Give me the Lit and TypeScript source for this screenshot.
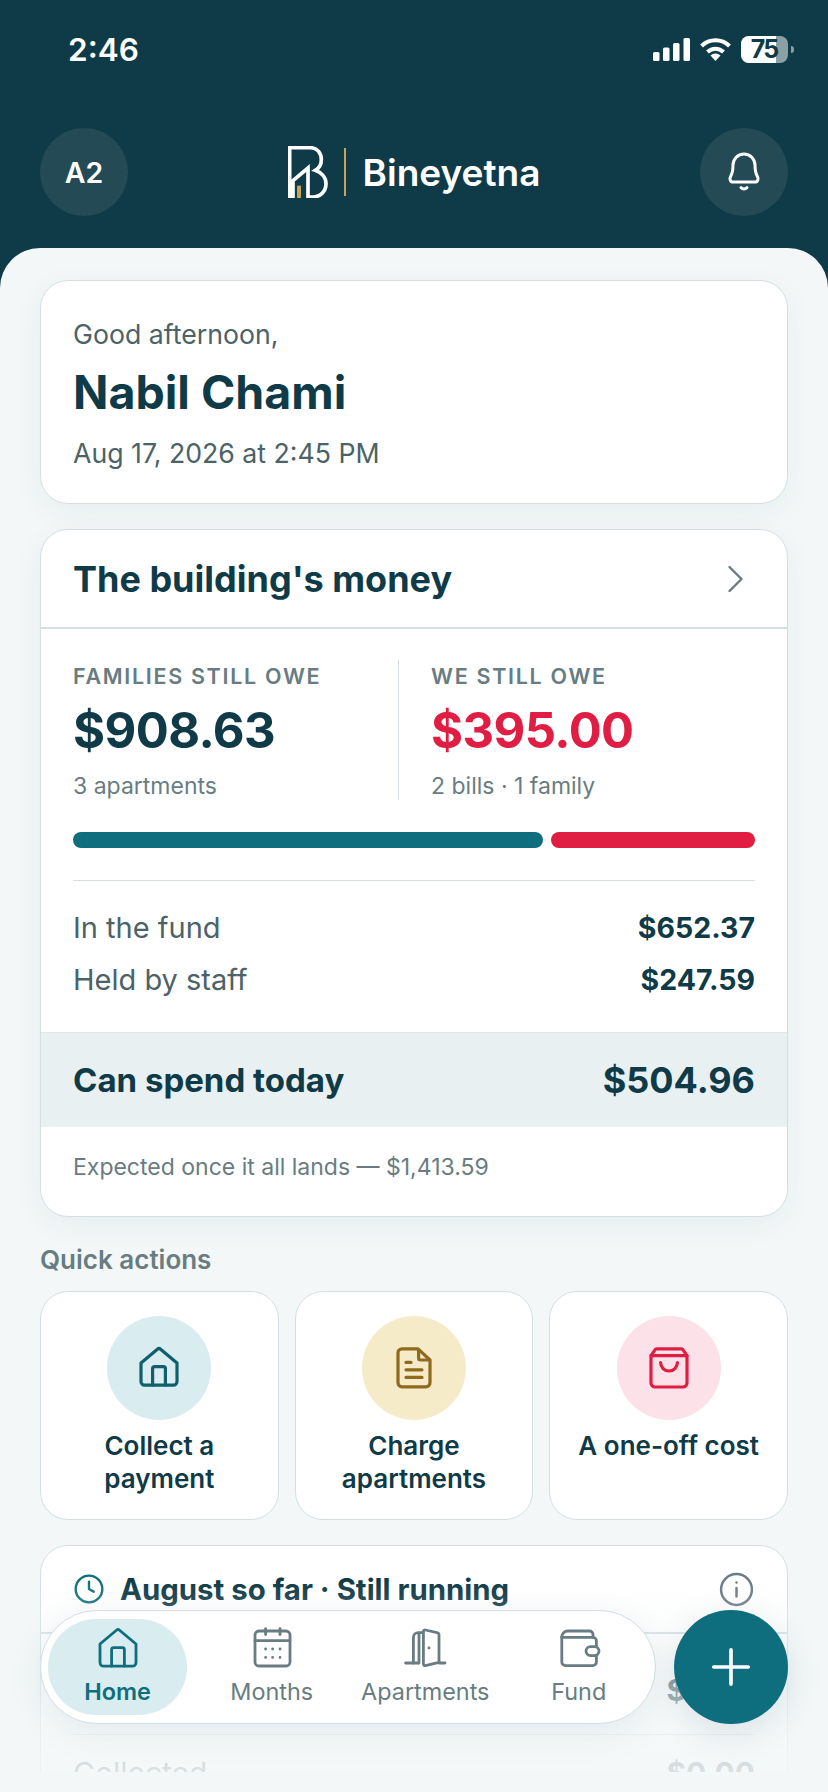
import { LitElement, html, css, svg } from 'lit';
import { customElement } from 'lit/decorators.js';

const icon = (body: unknown, size = 48, stroke = 'currentColor', width = 1.5) => html`
  <svg width=${size} height=${size} viewBox="0 0 24 24" fill="none" stroke=${stroke}
    stroke-width=${width} stroke-linecap="round" stroke-linejoin="round">${body}</svg>
`;

const HOME = svg`<path d="M3 9.500 11.200 2.600a1.200 1.200 0 0 1 1.600 0L21 9.500v9.300a1.800 1.800 0 0 1-1.800 1.800H4.800A1.800 1.800 0 0 1 3 18.800Z"/><path d="M8.800 20.500v-8.200a1 1 0 0 1 1-1h4.400a1 1 0 0 1 1 1v8.200"/>`;
const DOC = svg`<path d="M14 2.400H6a2 2 0 0 0-2 2v15a2 2 0 0 0 2 2h12a2 2 0 0 0 2-2V8Z"/><path d="M14.300 2.800V7a1 1 0 0 0 1 1h4.300"/><path d="M8 9.200h2.500M8 12.900h8M8 16.700h8"/>`;
const BAG = svg`<path d="M5.800 2.400h12.400a1 1 0 0 1 .8.500l2 2.900v13.700a2 2 0 0 1-2 2H5a2 2 0 0 1-2-2V5.800l2-2.900a1 1 0 0 1 .8-.5Z"/><path d="M3 5.800h18"/><path d="M7.800 9.300a4.200 4.200 0 0 0 8.400 0"/>`;
const CAL = svg`<rect x="3.500" y="3" width="17.500" height="17.500" rx="2"/><path d="M3.500 7.800H21M8.800 1.800v3M16 1.800v3"/><path d="M8.800 12h.01M12.300 12h.01M16 12h.01M8.800 16.200h.01M12.300 16.200h.01M16 16.200h.01"/>`;
const DOOR = svg`<path d="M2.300 19h6.500M19 19h3"/><path d="M6.200 19V6.200A2.400 2.400 0 0 1 8.600 3.800H11M9 4v15"/><path d="M11.200 3.200a.8.8 0 0 1 1-.7l5.800 1.300a1.200 1.200 0 0 1 1 1.200V18.700l-6.800 1.600a.8.8 0 0 1-1-.8Z"/><path d="M14 11.500h.01"/>`;
const WALLET = svg`<path d="M20.700 10.800V8a1.800 1.800 0 0 0-1.800-1.800H3.400"/><path d="M3.400 6v12.500a1.800 1.800 0 0 0 1.800 1.800h13.700a1.800 1.800 0 0 0 1.800-1.800v-3.200"/><path d="M3.400 6a3 3 0 0 1 3-3h10.800a1.800 1.800 0 0 1 1.800 1.800v1.400"/><rect x="15.500" y="10.800" width="6.500" height="4.500" rx="2.250"/>`;
const BELL = svg`<path d="M12 3a5.500 5.500 0 0 0-5.500 5.500c0 3-.5 4.500-1.200 5.700-.6 1-.4 2.800 1.200 2.800h11c1.600 0 1.800-1.800 1.200-2.800-.7-1.200-1.200-2.700-1.200-5.700A5.500 5.500 0 0 0 12 3Z"/><path d="M10.500 19.800a2 2 0 0 0 3 0"/>`;

@customElement('app-root')
export class AppRoot extends LitElement {
  static styles = css`
    :host {
      display: block;
      position: relative;
      width: 828px;
      height: 1792px;
      overflow: hidden;
      background: #0f3a47;
      font-family: Inter, "Liberation Sans", sans-serif;
      color: #0f3a47;
    }

    .status {
      height: 98px;
      box-sizing: border-box;
      display: flex;
      justify-content: space-between;
      align-items: center;
      padding: 0 34px 0 68px;
      color: #fff;
    }

    .time {
      font-size: 31.5px;
      font-weight: 600;
    }

    .status-icons {
      display: flex;
      align-items: center;
      gap: 10px;
    }

    .battery {
      position: relative;
      width: 47px;
      height: 27px;
      border-radius: 8px;
      background: #8aa0a4;
      color: #0f3a47;
      font-size: 25px;
      font-weight: 700;
      letter-spacing: -2px;
      line-height: 27px;
      padding-right: 1px;
      box-sizing: border-box;
      text-align: center;
    }

    .battery-fill {
      position: absolute;
      left: 0;
      top: 0;
      bottom: 0;
      width: 35px;
      border-radius: 8px 0 0 8px;
      background: #fff;
    }

    .battery-num {
      position: relative;
    }

    .battery-tip {
      width: 3px;
      height: 7px;
      margin-left: -7px;
      border-radius: 0 3px 3px 0;
      background: #8aa0a4;
    }

    .topbar {
      height: 150px;
      box-sizing: border-box;
      display: flex;
      justify-content: space-between;
      align-items: flex-start;
      padding: 30px 40px 0;
      color: #fff;
    }

    .round {
      width: 88px;
      height: 88px;
      border-radius: 50%;
      background: #244b55;
      display: flex;
      align-items: center;
      justify-content: center;
      font-size: 28.5px;
      font-weight: 600;
    }

    .brand {
      display: flex;
      align-items: center;
      height: 88px;
    }

    .brand-rule {
      width: 2px;
      height: 48px;
      margin: 0 17px 0 16px;
      background: #c9a25a;
    }

    .brand-name {
      font-size: 37px;
      font-weight: 600;
    }

    .sheet {
      height: 1544px;
      box-sizing: border-box;
      padding: 32px 40px 0;
      border-radius: 40px 40px 0 0;
      background: #f3f7f8;
      overflow: hidden;
      display: flex;
      flex-direction: column;
    }

    .card {
      flex: none;
      box-sizing: border-box;
      background: #fff;
      border: 1px solid #d3dfe3;
      border-radius: 28px;
      overflow: hidden;
    }

    .greet {
      height: 224px;
      padding: 35px 32px 0;
      margin-bottom: 25px;
      box-shadow: 0 8px 30px rgba(15, 58, 71, 0.05);
    }

    .hello,
    .when {
      font-size: 26.7px;
      line-height: 36px;
      color: #4c6269;
    }

    .who {
      font-size: 46.5px;
      font-weight: 700;
      line-height: 62px;
      margin: 9px 0 12px;
    }

    .money {
      height: 688px;
      box-shadow: 0 8px 30px rgba(15, 58, 71, 0.05);
    }

    .money-head {
      height: 99px;
      box-sizing: border-box;
      padding: 0 32px;
      border-bottom: 2px solid #d3dfe3;
      display: flex;
      align-items: center;
      justify-content: space-between;
      font-size: 36px;
      font-weight: 700;
    }

    .money-head svg {
      margin-right: 3px;
    }

    .stats {
      display: flex;
      margin: 31px 32px 0;
    }

    .stat {
      flex: none;
      height: 140px;
      box-sizing: border-box;
      padding-top: 2px;
    }

    .stat:first-child {
      width: 326px;
      border-right: 1px solid #d3dfe3;
    }

    .stat:last-child {
      padding-left: 32px;
    }

    .label {
      font-size: 21.5px;
      font-weight: 600;
      letter-spacing: 1.7px;
      line-height: 28px;
      color: #687c82;
    }

    .amount {
      font-size: 49px;
      font-weight: 700;
      letter-spacing: -0.6px;
      line-height: 60px;
      margin-top: 11px;
    }

    .amount.red {
      color: #e01e43;
    }

    .note {
      font-size: 23px;
      line-height: 30px;
      margin-top: 10px;
      color: #687c82;
    }

    .bar {
      display: flex;
      gap: 8px;
      margin: 32px 32px 0;
    }

    .bar div {
      height: 16px;
      border-radius: 8px;
    }

    .rows {
      margin: 32px 32px 0;
      padding-top: 21px;
      border-top: 1px solid #d3dfe3;
    }

    .row {
      display: flex;
      justify-content: space-between;
      align-items: center;
      height: 51.5px;
      font-size: 29px;
      color: #4c6269;
    }

    .row b {
      font-size: 28.5px;
      font-weight: 700;
      color: #0f3a47;
    }

    .today {
      height: 95px;
      box-sizing: border-box;
      margin-top: 27px;
      padding: 0 32px;
      border-top: 1px solid #dfe8ea;
      display: flex;
      justify-content: space-between;
      align-items: center;
      background: #e9f0f2;
      font-size: 33px;
      font-weight: 700;
    }

    .today b {
      font-size: 36px;
      font-weight: 700;
    }

    .expected {
      padding: 25px 32px 0;
      font-size: 23px;
      line-height: 30px;
      color: #687c82;
    }

    .section {
      flex: none;
      margin: 27px 0 15px;
      font-size: 26px;
      font-weight: 600;
      line-height: 32px;
      color: #687c82;
    }

    .actions {
      flex: none;
      display: grid;
      grid-template-columns: repeat(3, 1fr);
      gap: 16px;
      margin-bottom: 25px;
    }

    .action {
      height: 229px;
      padding: 24px 12px 0;
      display: flex;
      flex-direction: column;
      align-items: center;
      text-align: center;
      font-size: 26px;
      font-weight: 600;
      line-height: 33px;
    }

    .disc {
      width: 104px;
      height: 104px;
      margin-bottom: 9px;
      border-radius: 50%;
      display: flex;
      align-items: center;
      justify-content: center;
    }

    .month {
      height: 400px;
    }

    .month-head {
      height: 88px;
      box-sizing: border-box;
      padding: 0 32px;
      border-bottom: 2px solid #d3dfe3;
      display: flex;
      align-items: center;
      gap: 15px;
      font-size: 29.4px;
      font-weight: 700;
    }

    .month-head svg:last-child {
      margin-left: auto;
    }

    .month-rows {
      padding: 0 32px;
      color: #4c6269;
      font-size: 30px;
    }

    .month-row {
      display: flex;
      justify-content: space-between;
      align-items: center;
      height: 101px;
      box-sizing: border-box;
      padding-top: 12px;
      font-weight: 700;
      color: #0f3a47;
      border-bottom: 1px solid #d3dfe3;
    }

    .month-row.plain {
      font-weight: 400;
      color: #4c6269;
      height: 76px;
      padding-top: 0;
      border: none;
    }

    .month-row.plain span:last-child {
      font-weight: 700;
    }

    .fade {
      position: absolute;
      left: 0;
      right: 0;
      bottom: 0;
      height: 212px;
      background: linear-gradient(
        to bottom,
        rgba(243, 247, 248, 0),
        rgba(243, 247, 248, 0.6) 110px,
        rgba(243, 247, 248, 0.85) 192px,
        #f3f7f8 192px
      );
    }

    .nav {
      position: absolute;
      left: 40px;
      top: 1610px;
      width: 616px;
      height: 114px;
      box-sizing: border-box;
      padding: 8px 0 8px 7px;
      border: 1px solid #d3dfe3;
      border-radius: 57px;
      background: #fff;
      box-shadow: 0 10px 36px rgba(15, 58, 71, 0.08);
      display: grid;
      grid-template-columns: 147px repeat(3, 153.5px);
    }

    .tab {
      display: flex;
      flex-direction: column;
      align-items: center;
      justify-content: center;
      gap: 5px;
      padding-bottom: 3px;
      font-size: 23.4px;
      line-height: 28px;
      color: #687c82;
      border-radius: 48px;
    }

    .tab.on {
      margin-right: 8px;
      background: #d9ecf0;
      color: #0f6e7e;
      font-weight: 600;
    }

    .fab {
      position: absolute;
      left: 674px;
      top: 1610px;
      width: 114px;
      height: 114px;
      border-radius: 50%;
      background: #0f6e7e;
      display: flex;
      align-items: center;
      justify-content: center;
      box-shadow: 0 10px 36px rgba(15, 58, 71, 0.12);
    }
  `;

  render () {
    return html`
      <div class="status">
        <div class="time">2:46</div>
        <div class="status-icons">
          <svg width="37" height="23" viewBox="0 0 37 23" fill="#fff">
            <rect x="0" y="14" width="6.500" height="9" rx="1.500"/>
            <rect x="10" y="9.500" width="6.500" height="13.500" rx="1.500"/>
            <rect x="20" y="5" width="6.500" height="18" rx="1.500"/>
            <rect x="30.500" y="0" width="6.500" height="23" rx="1.500"/>
          </svg>
          <svg width="31" height="23" viewBox="0 0 31 23" fill="none" stroke="#fff" stroke-width="4">
            <path d="M1.500 8a20 20 0 0 1 28 0"/>
            <path d="M7.500 14a11.500 11.500 0 0 1 16 0"/>
            <path d="M15.500 23l-5-5.500a7 7 0 0 1 10 0Z" fill="#fff" stroke="none"/>
          </svg>
          <div class="battery">
            <div class="battery-fill"></div>
            <span class="battery-num">75</span>
          </div>
          <div class="battery-tip"></div>
        </div>
      </div>

      <div class="topbar">
        <div class="round">A2</div>
        <div class="brand">
          <svg width="40" height="52" viewBox="85 48 120 156" fill="none">
            <path d="M90 204V53h62c22 0 33 18 33 36 0 14-8 26-18 32 16 6 32 20 32 40 0 24-18 40-40 40h-14V114l-45 38v52"
              stroke="#fff" stroke-width="11"/>
            <rect x="112" y="167" width="12" height="37" fill="#c9a25a"/>
          </svg>
          <div class="brand-rule"></div>
          <div class="brand-name">Bineyetna</div>
        </div>
        <div class="round">${icon(BELL, 48, '#fff', 1.5)}</div>
      </div>

      <div class="sheet">
        <div class="card greet">
          <div class="hello">Good afternoon,</div>
          <div class="who">Nabil Chami</div>
          <div class="when">Aug 17, 2026 at 2:45 PM</div>
        </div>

        <div class="card money">
          <div class="money-head">
            <span>The building's money</span>
            ${icon(svg`<path d="m9 4 8 8-8 8"/>`, 36, '#687c82', 1.600)}
          </div>
          <div class="stats">
            <div class="stat">
              <div class="label">FAMILIES STILL OWE</div>
              <div class="amount">$908.63</div>
              <div class="note">3 apartments</div>
            </div>
            <div class="stat">
              <div class="label">WE STILL OWE</div>
              <div class="amount red">$395.00</div>
              <div class="note">2 bills · 1 family</div>
            </div>
          </div>
          <div class="bar">
            <div style="width: 470px; background: #0f6e7e"></div>
            <div style="flex: 1; background: #e01e43"></div>
          </div>
          <div class="rows">
            <div class="row"><span>In the fund</span><b>$652.37</b></div>
            <div class="row"><span>Held by staff</span><b>$247.59</b></div>
          </div>
          <div class="today"><span>Can spend today</span><b>$504.96</b></div>
          <div class="expected">Expected once it all lands — $1,413.59</div>
        </div>

        <div class="section">Quick actions</div>
        <div class="actions">
          <div class="card action">
            <div class="disc" style="background: #d9ecf0">${icon(HOME, 48, '#0f5f6e', 1.600)}</div>
            Collect a payment
          </div>
          <div class="card action">
            <div class="disc" style="background: #f6ebc9">${icon(DOC, 48, '#8f6a1c', 1.600)}</div>
            Charge apartments
          </div>
          <div class="card action">
            <div class="disc" style="background: #fde1e8">${icon(BAG, 48, '#e01e43', 1.600)}</div>
            A one-off cost
          </div>
        </div>

        <div class="card month">
          <div class="month-head">
            ${icon(svg`<circle cx="12" cy="12" r="10"/><path d="M12 6.500V12l3.500 2"/>`, 32, '#0f6e7e', 1.800)}
            <span>August so far · Still running</span>
            ${icon(svg`<circle cx="12" cy="12" r="10"/><path d="M12 11v5.500M12 7.500h.01"/>`, 37, '#687c82', 1.600)}
          </div>
          <div class="month-rows">
            <div class="month-row"><span></span><span>$0.00</span></div>
            <div class="month-row plain"><span>Collected</span><span>$0.00</span></div>
          </div>
        </div>
      </div>

      <div class="fade"></div>

      <div class="nav">
        <div class="tab on">${icon(HOME, 48, '#0f6e7e', 1.400)}Home</div>
        <div class="tab">${icon(CAL, 48, '#687c82', 1.400)}Months</div>
        <div class="tab">${icon(DOOR, 48, '#687c82', 1.400)}Apartments</div>
        <div class="tab">${icon(WALLET, 48, '#687c82', 1.400)}Fund</div>
      </div>
      <div class="fab">${icon(svg`<path d="M12 3v18M3 12h18"/>`, 46, '#fff', 1.900)}</div>
    `;
  }
}
